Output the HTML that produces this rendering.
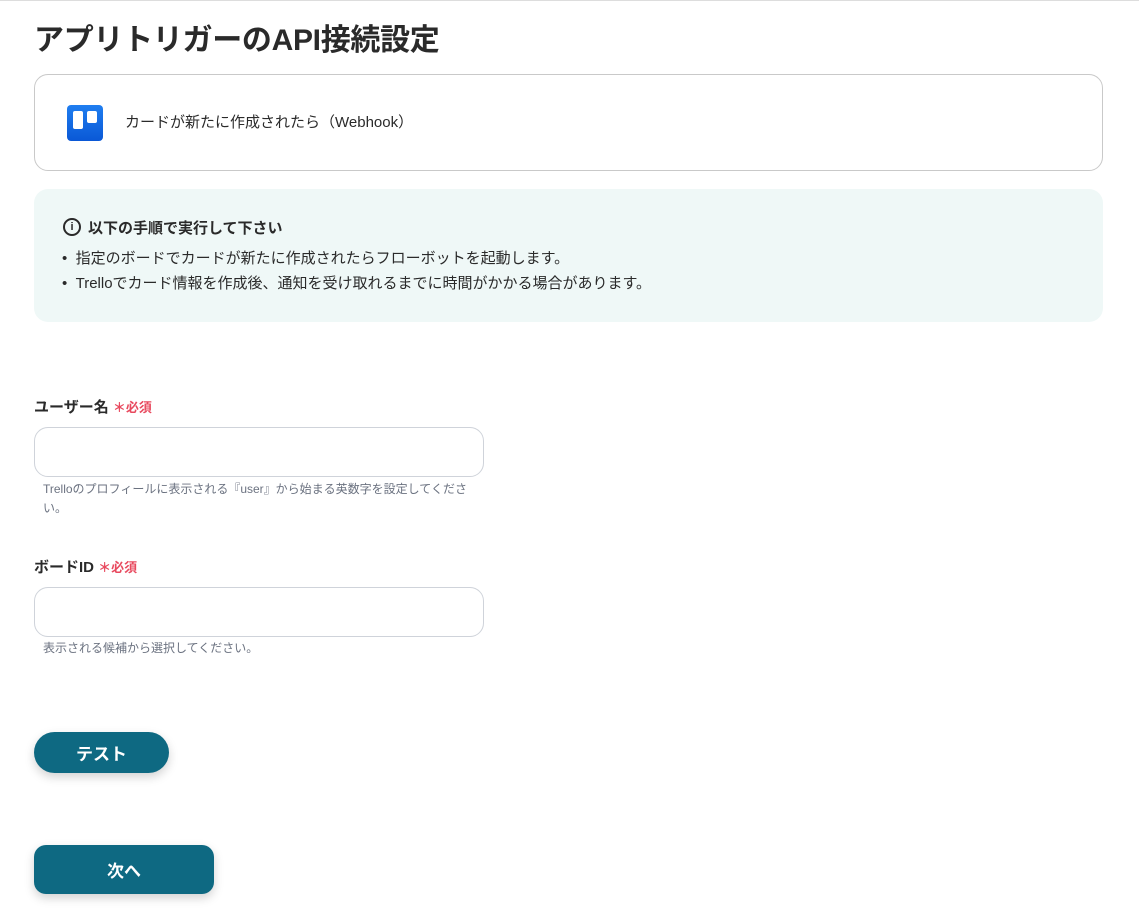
<!DOCTYPE html>
<html><head><meta charset="utf-8"><style>
*{box-sizing:border-box;margin:0;padding:0}
body{width:1139px;height:912px;overflow:hidden;background:#fff;font-family:"Liberation Sans","Noto Sans CJK JP",sans-serif;color:#2a2a2a;position:relative}
.abs{position:absolute}
h1{position:absolute;left:34px;top:15px;font-size:30px;font-weight:700;letter-spacing:-0.3px;color:#2a2a2a}
.card{left:34px;top:74px;width:1069px;height:97px;border:1px solid #c9c9c9;border-radius:14px}
.info{left:34px;top:189px;width:1069px;height:133px;background:#eff8f7;border-radius:14px}
.lbl{font-size:15px;font-weight:700;color:#2a2a2a}
.req{color:#e8495e;font-size:13px;font-weight:700}
.inp{width:450px;height:50px;border:1px solid #cfd3da;border-radius:14px;left:34px}
.help{font-size:12px;color:#6b7280;line-height:19px;left:43px;width:440px}
.btn{background:#0e6982;color:#fff;font-weight:700;font-size:17px;display:flex;align-items:center;justify-content:center;box-shadow:0 4px 10px rgba(0,0,0,.18)}
</style></head><body>
<div class="abs" style="left:0;top:0;width:1139px;height:1px;background:#ddd"></div>
<h1>アプリトリガーのAPI接続設定</h1>
<div class="abs card">
 <div class="abs" style="left:32px;top:30px;width:36px;height:36px;border-radius:4px;background:linear-gradient(#1f7ef0,#0a58d6)">
  <div class="abs" style="left:6px;top:6px;width:10px;height:18px;background:#fff;border-radius:2px"></div>
  <div class="abs" style="left:20px;top:6px;width:10px;height:12px;background:#fff;border-radius:2px"></div>
 </div>
 <div class="abs" style="left:90px;top:36px;font-size:15px">カードが新たに作成されたら（Webhook）</div>
</div>
<div class="abs info">
 <div class="abs" style="left:29px;top:29px;width:18px;height:18px;border:2px solid #2a2a2a;border-radius:50%;font-size:11px;font-weight:700;text-align:center;line-height:14px">i</div>
 <div class="abs" style="left:54px;top:28px;font-size:15px;font-weight:700">以下の手順で実行して下さい</div>
 <div class="abs" style="left:28px;top:57px;font-size:15px;line-height:25px">
  • &nbsp;指定のボードでカードが新たに作成されたらフローボットを起動します。<br>
  • &nbsp;Trelloでカード情報を作成後、通知を受け取れるまでに時間がかかる場合があります。
 </div>
</div>
<div class="abs lbl" style="left:34px;top:396px">ユーザー名 <span class="req">＊必須</span></div>
<div class="abs inp" style="top:427px"></div>
<div class="abs help" style="top:480px">Trelloのプロフィールに表示される『user』から始まる英数字を設定してください。</div>
<div class="abs lbl" style="left:34px;top:556px">ボードID <span class="req">＊必須</span></div>
<div class="abs inp" style="top:587px"></div>
<div class="abs help" style="top:639px">表示される候補から選択してください。</div>
<div class="abs btn" style="left:34px;top:732px;width:135px;height:41px;border-radius:21px">テスト</div>
<div class="abs btn" style="left:34px;top:845px;width:180px;height:49px;border-radius:12px">次へ</div>
</body></html>
